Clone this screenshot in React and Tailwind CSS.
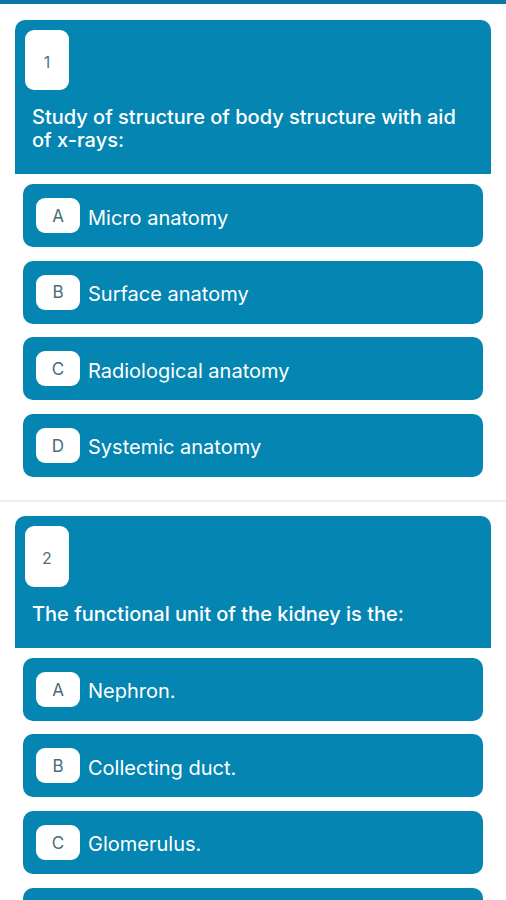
import React from "react";

const questions = [
  {
    n: 1,
    q: "Study of structure of body structure with aid of x-rays:",
    box: "h-[60px]",
    opts: [
      ["A", "Micro anatomy"],
      ["B", "Surface anatomy"],
      ["C", "Radiological anatomy"],
      ["D", "Systemic anatomy"],
    ],
  },
  {
    n: 2,
    q: "The functional unit of the kidney is the:",
    box: "h-[61px]",
    opts: [
      ["A", "Nephron."],
      ["B", "Collecting duct."],
      ["C", "Glomerulus."],
      ["", ""],
    ],
  },
];

function Question({ data }) {
  return (
    <div>
      <div className="mx-[15px] rounded-t-[10px] bg-[#0585b1] pt-[10px] pb-[22px]">
        <div
          className={`ml-[10px] flex w-[44px] items-center justify-center rounded-[9px] bg-white pt-[3px] text-[16px] text-[#52707f] ${data.box}`}
        >
          {data.n}
        </div>
        <div className="mt-[16px] pr-[14px] pl-[17px] text-[20px] font-medium leading-[23px] text-white">
          {data.q}
        </div>
      </div>
      <div className="mt-[10px] flex flex-col gap-[13.6px]">
        {data.opts.map(([l, t], i) => (
          <div
            key={i}
            className="mx-[23px] flex h-[63px] items-center rounded-[10px] bg-[#0585b1] pl-[13px]"
          >
            {l && (
              <>
                <div className="flex h-[35px] w-[44px] items-center justify-center rounded-[9px] bg-white pt-[2px] text-[17px] text-[#4c6b7a]">
                  {l}
                </div>
                <div className="ml-[8px] pt-[4px] text-[20px] text-white">{t}</div>
              </>
            )}
          </div>
        ))}
      </div>
    </div>
  );
}

export default function App() {
  return (
    <div className="min-h-[900px] w-[506px] bg-white font-['Inter',sans-serif]">
      <div className="h-[4px] bg-[#0a79a8]" />
      <div className="pt-[16px]">
        <Question data={questions[0]} />
      </div>
      <div className="mt-[23px] h-[2px] bg-[#eeeeee]" />
      <div className="pt-[14px]">
        <Question data={questions[1]} />
      </div>
    </div>
  );
}
